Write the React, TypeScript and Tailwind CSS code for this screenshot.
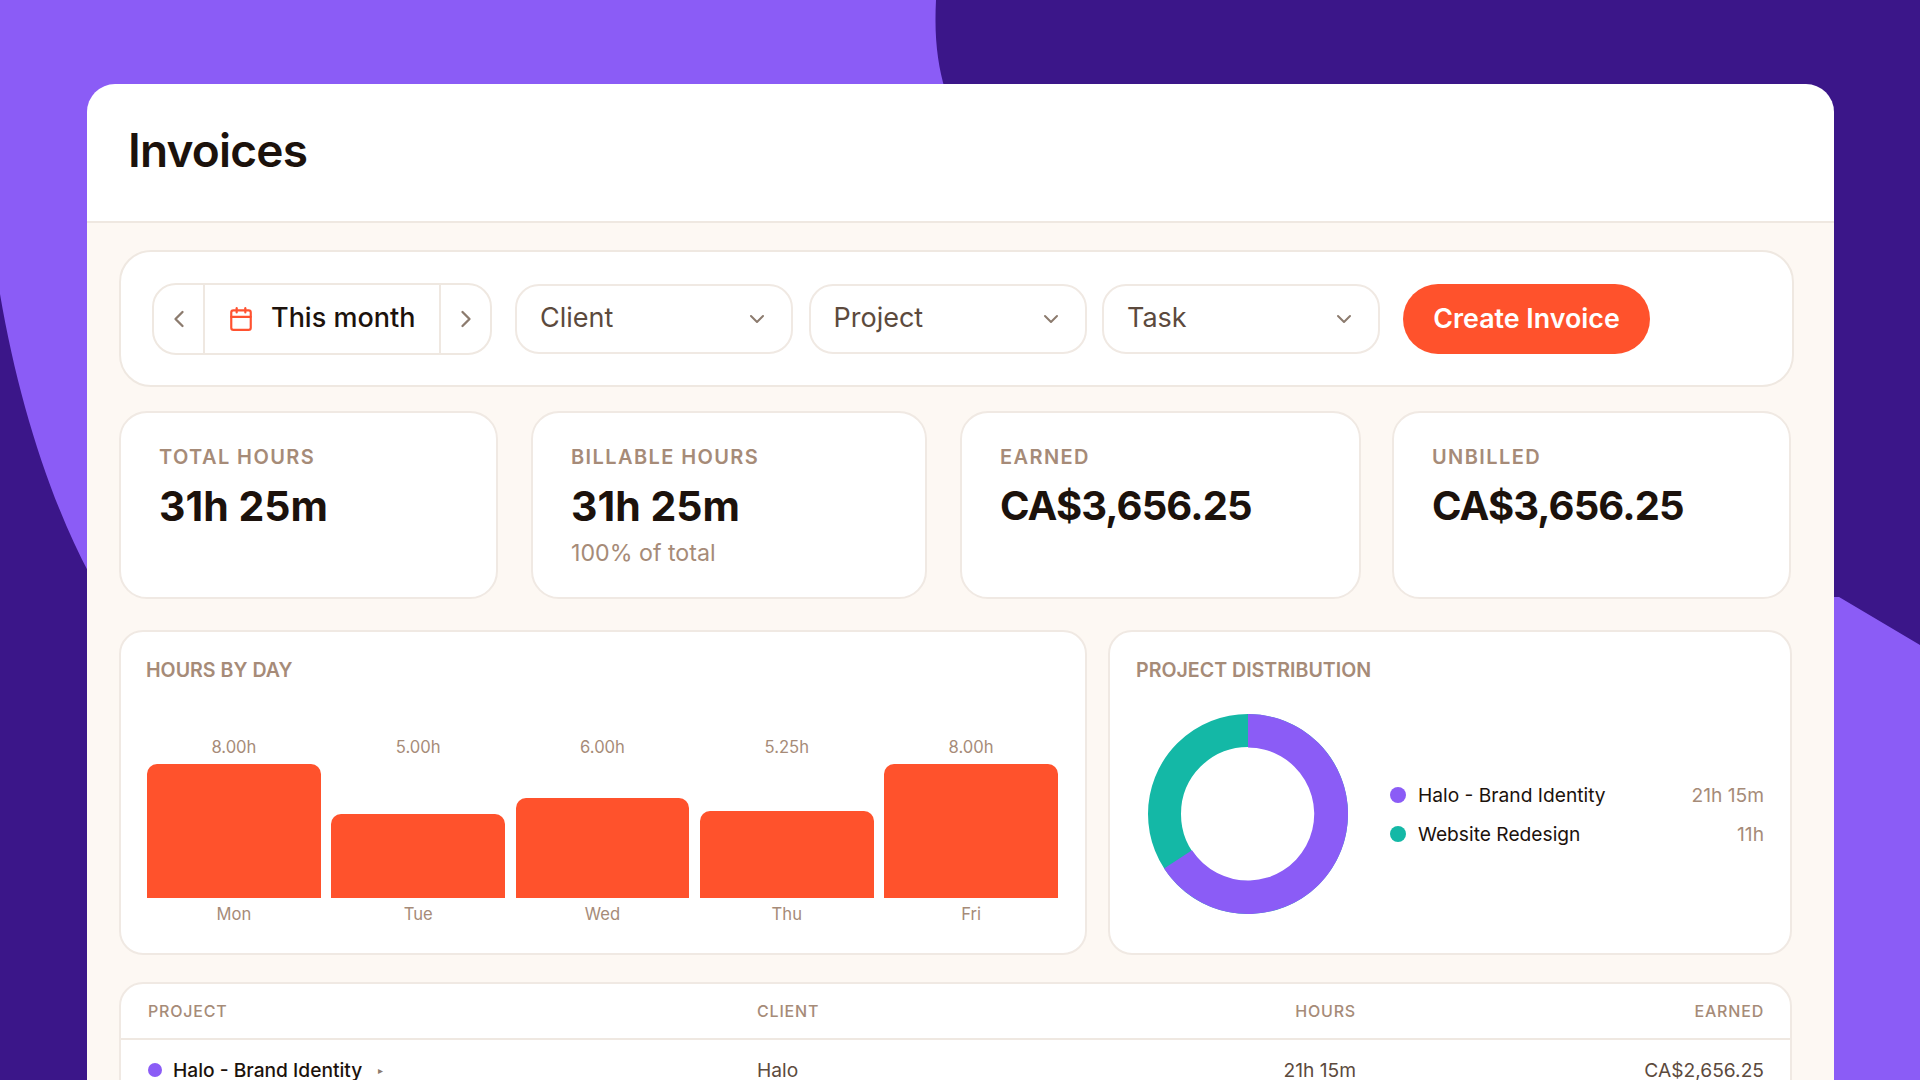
import { Calendar, ChevronDown, ChevronLeft, ChevronRight } from 'lucide-react';

const stats = [
  { label: 'TOTAL HOURS', value: '31h 25m', valueClass: 'text-[41px]' },
  { label: 'BILLABLE HOURS', value: '31h 25m', valueClass: 'text-[41px]', sub: '100% of total' },
  { label: 'EARNED', value: 'CA$3,656.25', valueClass: 'text-[40px] tracking-[-0.9px]' },
  { label: 'UNBILLED', value: 'CA$3,656.25', valueClass: 'text-[40px] tracking-[-0.9px]', cardClass: '-ml-[2px]' },
];

const bars = [
  { day: 'Mon', value: '8.00h', height: 134 },
  { day: 'Tue', value: '5.00h', height: 84 },
  { day: 'Wed', value: '6.00h', height: 100 },
  { day: 'Thu', value: '5.25h', height: 87 },
  { day: 'Fri', value: '8.00h', height: 134 },
];

function Backdrop() {
  return (
    <svg className="absolute inset-0 h-full w-full" viewBox="0 0 1920 1080" preserveAspectRatio="none">
      <rect width="1920" height="1080" fill="#8b5cf6" />
      <path d="M936 0 C934 40 938 65 945 90 L1834 594 L1920 645 L1920 0 Z" fill="#3b1689" />
      <path d="M945 84 L1840 84 L1840 597 L945 597 Z" fill="#3b1689" />
      <path d="M0 294 C18 400 50 500 90 575 L90 1080 L0 1080 Z" fill="#3b1689" />
    </svg>
  );
}

function Select({ label }: { label: string }) {
  return (
    <div className="flex h-[70px] w-[278px] items-center justify-between rounded-[24px] border-2 border-[#f0e9e3] bg-white pl-[23px] pr-[22px]">
      <span className="text-[27px] text-[#5c4a3d]">{label}</span>
      <ChevronDown className="h-6 w-6 text-[#8c7b6e]" strokeWidth={2} />
    </div>
  );
}

export default function App() {
  return (
    <div className="relative h-screen overflow-hidden font-['Inter',sans-serif]">
      <Backdrop />
      <div className="relative ml-[87px] mt-[84px] w-[1747px] rounded-t-[28px] bg-white">
        <div className="flex h-[139px] items-center border-b-2 border-[#efe8e1] px-[41px] pb-[4px]">
          <h1 className="text-[46px] font-semibold tracking-[-0.8px] text-[#1c120c]">Invoices</h1>
        </div>

        <div className="h-[900px] bg-[#fdf8f3] pl-[32px] pr-[40px] pt-[27px]">
          {/* Filters */}
          <div className="flex h-[137px] items-center rounded-[32px] border-2 border-[#efe8e1] bg-white pl-[31px]">
            <div className="flex h-[72px] w-[340px] items-stretch rounded-[24px] border-2 border-[#efe8e1]">
              <div className="flex w-[51px] items-center justify-center border-r-2 border-[#efe8e1]">
                <ChevronLeft className="h-7 w-7 text-[#8c7b6e]" strokeWidth={2} />
              </div>
              <div className="flex flex-1 items-center gap-[17px] pl-[23px]">
                <Calendar className="h-[26px] w-[26px] text-[#ff5230]" strokeWidth={2} />
                <span className="text-[27px] font-medium text-[#1c120c]">This month</span>
              </div>
              <div className="flex w-[51px] items-center justify-center border-l-2 border-[#efe8e1]">
                <ChevronRight className="h-7 w-7 text-[#8c7b6e]" strokeWidth={2} />
              </div>
            </div>
            <div className="ml-[23px] flex gap-[15.5px]">
              <Select label="Client" />
              <Select label="Project" />
              <Select label="Task" />
            </div>
            <button className="ml-[23px] flex h-[70px] w-[247px] items-center justify-center rounded-full bg-[#ff522c] text-[26.8px] font-semibold text-white">
              Create Invoice
            </button>
          </div>

          {/* Stats */}
          <div className="mt-[24px] grid h-[188px] grid-cols-[379px_396px_401px_397px] gap-x-[33px] pr-[3px]">
            {stats.map((s) => (
              <div key={s.label} className={`rounded-[28px] border-2 border-[#f0e9e3] bg-white px-[38px] pt-[30px] ${s.cardClass ?? ''}`}>
                <div className="text-[20px] font-semibold leading-[28px] tracking-[1.4px] text-[#a68b78]">{s.label}</div>
                <div className={`mt-[11px] font-bold leading-[48px] text-[#1c120c] ${s.valueClass}`}>{s.value}</div>
                {s.sub && <div className="mt-[7px] text-[23.2px] leading-[32px] text-[#a68b78]">{s.sub}</div>}
              </div>
            ))}
          </div>

          {/* Charts */}
          <div className="mt-[31px] flex h-[325px] gap-[21px] pr-[2px]">
            <div className="flex w-[968px] flex-col rounded-[24px] border-2 border-[#f0e9e3] bg-white pl-[26px] pr-[27px] pt-[24px]">
              <div className="-ml-px text-[19.6px] font-semibold leading-[28px] text-[#a68b78]">HOURS BY DAY</div>
              <div className="mt-[51px] flex gap-[10.5px]">
                {bars.map((b) => (
                  <div key={b.day} className="flex flex-1 flex-col items-center">
                    <span className="text-[16.6px] leading-[24px] text-[#a68b78]">{b.value}</span>
                    <div className="flex h-[139px] w-full items-end">
                      <div className="w-full rounded-t-[10px] bg-[#ff522c]" style={{ height: b.height }} />
                    </div>
                    <span className="mt-[4px] text-[16.6px] leading-[24px] text-[#a68b78]">{b.day}</span>
                  </div>
                ))}
              </div>
            </div>

            <div className="flex flex-1 flex-col rounded-[24px] border-2 border-[#f0e9e3] bg-white pl-[26px] pr-[26px] pt-[24px]">
              <div className="text-[19.6px] font-semibold leading-[28px] text-[#a68b78]">PROJECT DISTRIBUTION</div>
              <div className="mt-[30px] flex items-center gap-[42px]">
                <svg width="200" height="200" viewBox="0 0 200 200" className="ml-[12px] shrink-0">
                  <circle cx="100" cy="100" r="83.5" fill="none" stroke="#14b8a6" strokeWidth="33" />
                  <path d="M100 0 A100 100 0 1 1 16.1 154.4 L44 136.3 A66.5 66.5 0 1 0 100 33.5 Z" fill="#8b5cf6" />
                </svg>
                <div className="flex flex-1 flex-col gap-[15px]">
                  <div className="flex items-center justify-between">
                    <div className="flex items-center gap-[12px]">
                      <span className="h-[16px] w-[16px] rounded-full bg-[#8b5cf6]" />
                      <span className="text-[19.2px] leading-[24px] text-[#1c120c]">Halo - Brand Identity</span>
                    </div>
                    <span className="text-[19.2px] leading-[24px] text-[#a68b78]">21h 15m</span>
                  </div>
                  <div className="flex items-center justify-between">
                    <div className="flex items-center gap-[12px]">
                      <span className="h-[16px] w-[16px] rounded-full bg-[#14b8a6]" />
                      <span className="text-[19.2px] leading-[24px] text-[#1c120c]">Website Redesign</span>
                    </div>
                    <span className="text-[19.2px] leading-[24px] text-[#a68b78]">11h</span>
                  </div>
                </div>
              </div>
            </div>
          </div>

          {/* Table */}
          <div className="mr-[2px] mt-[27px] rounded-t-[24px] border-2 border-[#f0e9e3] bg-white pb-[40px]">
            <div className="grid h-[56px] grid-cols-[609px_437px_162px_1fr] items-center border-b-2 border-[#efe8e1] pl-[27px] pr-[26px] text-[16px] font-medium tracking-[0.8px] text-[#a68b78]">
              <span>PROJECT</span>
              <span>CLIENT</span>
              <span className="text-right">HOURS</span>
              <span className="text-right">EARNED</span>
            </div>
            <div className="grid h-[61px] grid-cols-[609px_437px_162px_1fr] items-center pl-[27px] pr-[26px] text-[19.2px] text-[#5c4a3d]">
              <div className="flex items-center gap-[11px] font-medium text-[#1c120c]">
                <span className="h-[14px] w-[14px] rounded-full bg-[#8b5cf6]" />
                <span>Halo - Brand Identity</span>
                <span className="ml-[5px] text-[10px] text-[#8c7b6e]">▸</span>
              </div>
              <span>Halo</span>
              <span className="text-right">21h 15m</span>
              <span className="text-right">CA$2,656.25</span>
            </div>
          </div>
        </div>
      </div>
    </div>
  );
}
